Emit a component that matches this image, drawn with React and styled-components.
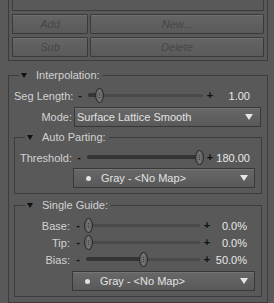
import styled, { createGlobalStyle } from "styled-components";

const GlobalStyle = createGlobalStyle`
  html, body {
    margin: 0;
    padding: 0;
    background: #595959;
  }
  body {
    font-family: "Liberation Sans", Arial, sans-serif;
    font-size: 11px;
    color: #d2d2d2;
  }
`;

const Page = styled.div`
  width: 274px;
  height: 303px;
  overflow: hidden;
  box-sizing: border-box;
  padding: 0 6px 0 8px;
`;

const TopPanel = styled.div`
  border: 1px solid #3c3c3c;
  border-top: none;
  padding: 0 3px 3px;
`;

const ListBox = styled.div`
  height: 10px;
  border: 1px solid #3c3c3c;
  border-top: none;
`;

const ButtonGrid = styled.div`
  display: grid;
  grid-template-columns: 76px 1fr;
  grid-auto-rows: 20px;
  column-gap: 2px;
  row-gap: 3px;
  margin-top: 3px;
`;

const Button = styled.button`
  box-sizing: border-box;
  padding: 0;
  font: italic 11px "Liberation Sans", Arial, sans-serif;
  color: #464646;
  background: linear-gradient(#656565, #5a5a5a);
  border: 1px solid #3a3a3a;
  border-radius: 1px;
  box-shadow: inset 0 1px 0 #707070;
`;

const Group = styled.fieldset`
  margin: ${(p) => p.$top}px 0 0;
  padding: 0 5px ${(p) => p.$bottom}px;
  border: 1px solid #3c3c3c;
  min-width: 0;
`;

const Legend = styled.legend`
  margin-left: 5px;
  padding: 0 3px 0 2px;
  line-height: 13px;
  color: #d2d2d2;
  white-space: nowrap;
`;

const Caret = styled.span`
  display: inline-block;
  width: 0;
  height: 0;
  border-left: 3px solid transparent;
  border-right: 3px solid transparent;
  border-top: 5px solid #111;
  margin-right: 9px;
  vertical-align: 1px;
`;

const Body = styled.div`
  display: flex;
  flex-direction: column;
  padding-top: 5px;
`;

const Field = styled.div`
  display: grid;
  grid-template-columns: ${(p) => p.$label}px 1fr;
  column-gap: 2px;
  align-items: center;
  height: ${(p) => p.$h || 17}px;
  margin-top: ${(p) => p.$top || 0}px;
`;

const Label = styled.span`
  text-align: right;
  white-space: nowrap;
  color: #d2d2d2;
`;

const SliderControl = styled.div`
  display: flex;
  align-items: center;
  height: 17px;
  padding-right: ${(p) => p.$pad}px;
`;

const Sign = styled.span`
  width: ${(p) => (p.$plus ? 10 : 12)}px;
  text-align: center;
  font-weight: bold;
  color: #111;
  line-height: 17px;
`;

const Track = styled.div`
  position: relative;
  flex: 1;
  height: 17px;

  &::before {
    content: "";
    position: absolute;
    left: 2px;
    right: 2px;
    top: 7px;
    height: 3px;
    border-radius: 2px;
    background: #4a4a4a;
  }
`;

const Fill = styled.div`
  position: absolute;
  left: 2px;
  top: 6px;
  height: 4px;
  border-radius: 2px;
  background: #353535;
`;

const Thumb = styled.div`
  position: absolute;
  top: 1px;
  width: 9px;
  height: 15px;
  box-sizing: border-box;
  border: 1px solid #2e2e2e;
  border-radius: 50%;
  background: linear-gradient(90deg, #5c5c5c, #767676 50%, #5c5c5c);

  &::after {
    content: "";
    position: absolute;
    left: 3px;
    top: 4px;
    width: 1px;
    height: 5px;
    background: repeating-linear-gradient(#3a3a3a 0 1px, transparent 1px 2px);
  }
`;

const Value = styled.span`
  width: 35px;
  text-align: right;
  color: #e8e8e8;
  white-space: nowrap;
`;

const Select = styled.div`
  grid-column: 2;
  display: flex;
  align-items: center;
  box-sizing: border-box;
  height: 20px;
  margin-right: 1px;
  padding: 0 ${(p) => p.$padR}px 0 ${(p) => p.$padL}px;
  border: 1px solid #383838;
  background: linear-gradient(#686868, #595959);
  box-shadow: inset 0 1px 0 #747474;
  color: #e2e2e2;
  white-space: nowrap;
`;

const Dot = styled.span`
  width: 5px;
  height: 5px;
  border-radius: 50%;
  background: #e2e2e2;
  margin-right: 10px;
`;

const Arrow = styled.span`
  margin-left: auto;
  width: 0;
  height: 0;
  border-left: 4px solid transparent;
  border-right: 4px solid transparent;
  border-top: 6px solid #e6e6e6;
`;

function Slider({ label, labelWidth, value, pct, padRight }) {
  return (
    <Field $label={labelWidth}>
      <Label>{label}</Label>
      <SliderControl $pad={padRight}>
        <Sign>-</Sign>
        <Track>
          <Fill style={{ width: `calc((100% - 9px) * ${pct} + 3px)` }} />
          <Thumb style={{ left: `calc((100% - 9px) * ${pct})` }} />
        </Track>
        <Sign $plus>+</Sign>
        <Value>{value}</Value>
      </SliderControl>
    </Field>
  );
}

function MapSelect({ labelWidth, top }) {
  return (
    <Field $label={labelWidth} $h={20} $top={top}>
      <Select $padL={12} $padR={6}>
        <Dot />
        Gray - &lt;No Map&gt;
        <Arrow />
      </Select>
    </Field>
  );
}

export default function App() {
  return (
    <Page>
      <GlobalStyle />
      <TopPanel>
        <ListBox />
        <ButtonGrid>
          <Button>Add</Button>
          <Button>New...</Button>
          <Button>Sub</Button>
          <Button>Delete</Button>
        </ButtonGrid>
      </TopPanel>

      <Group $top={8} $bottom={5}>
        <Legend>
          <Caret />
          Interpolation:
        </Legend>
        <Body>
          <Slider label="Seg Length:" labelWidth={58} value="1.00" pct={0.08} padRight={12} />
          <Field $label={58} $h={20} $top={3}>
            <Label>Mode:</Label>
            <Select $padL={2} $padR={7}>
              Surface Lattice Smooth
              <Arrow />
            </Select>
          </Field>

          <Group $top={4} $bottom={5}>
            <Legend>
              <Caret />
              Auto Parting:
            </Legend>
            <Body>
              <Slider label="Threshold:" labelWidth={51} value="180.00" pct={0.99} padRight={6} />
              <MapSelect labelWidth={51} top={2} />
            </Body>
          </Group>

          <Group $top={5} $bottom={5}>
            <Legend>
              <Caret />
              Single Guide:
            </Legend>
            <Body>
              <Slider label="Base:" labelWidth={50} value="0.0%" pct={0} padRight={9} />
              <Slider label="Tip:" labelWidth={50} value="0.0%" pct={0} padRight={9} />
              <Slider label="Bias:" labelWidth={50} value="50.0%" pct={0.5} padRight={9} />
              <MapSelect labelWidth={50} top={3} />
            </Body>
          </Group>
        </Body>
      </Group>
    </Page>
  );
}
